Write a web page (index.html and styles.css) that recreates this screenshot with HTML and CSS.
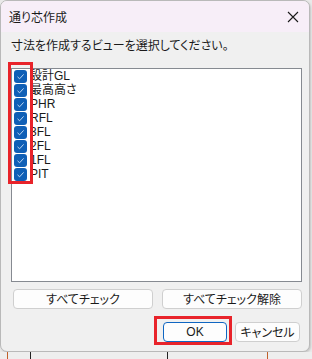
FILE: index.html
```html
<!DOCTYPE html>
<html lang="ja">
<head>
<meta charset="utf-8">
<link rel="stylesheet" href="styles.css">
</head>
<body>
<div class="screen">
  <div class="window">
    <div class="titlebar">
      <span class="title">通り芯作成</span>
      <span class="close">
        <svg width="12" height="12" viewBox="0 0 12 12"><path d="M1 1 L11 11 M11 1 L1 11" stroke="#1a1a1a" stroke-width="1.1" fill="none"/></svg>
      </span>
    </div>
    <div class="content">
      <div class="label">寸法を作成するビューを選択してください。</div>
      <div class="listbox">
        <div class="item"><span class="cb"><svg width="13" height="13" viewBox="0 0 13 13"><path d="M3.5 6.8 L5.6 8.8 L9.6 4.4" stroke="#bcd6f2" stroke-width="1" fill="none"/></svg></span><span class="txt">設計GL</span></div>
        <div class="item"><span class="cb"><svg width="13" height="13" viewBox="0 0 13 13"><path d="M3.5 6.8 L5.6 8.8 L9.6 4.4" stroke="#bcd6f2" stroke-width="1" fill="none"/></svg></span><span class="txt">最高高さ</span></div>
        <div class="item"><span class="cb"><svg width="13" height="13" viewBox="0 0 13 13"><path d="M3.5 6.8 L5.6 8.8 L9.6 4.4" stroke="#bcd6f2" stroke-width="1" fill="none"/></svg></span><span class="txt">PHR</span></div>
        <div class="item"><span class="cb"><svg width="13" height="13" viewBox="0 0 13 13"><path d="M3.5 6.8 L5.6 8.8 L9.6 4.4" stroke="#bcd6f2" stroke-width="1" fill="none"/></svg></span><span class="txt">RFL</span></div>
        <div class="item"><span class="cb"><svg width="13" height="13" viewBox="0 0 13 13"><path d="M3.5 6.8 L5.6 8.8 L9.6 4.4" stroke="#bcd6f2" stroke-width="1" fill="none"/></svg></span><span class="txt">3FL</span></div>
        <div class="item"><span class="cb"><svg width="13" height="13" viewBox="0 0 13 13"><path d="M3.5 6.8 L5.6 8.8 L9.6 4.4" stroke="#bcd6f2" stroke-width="1" fill="none"/></svg></span><span class="txt">2FL</span></div>
        <div class="item"><span class="cb"><svg width="13" height="13" viewBox="0 0 13 13"><path d="M3.5 6.8 L5.6 8.8 L9.6 4.4" stroke="#bcd6f2" stroke-width="1" fill="none"/></svg></span><span class="txt">1FL</span></div>
        <div class="item"><span class="cb"><svg width="13" height="13" viewBox="0 0 13 13"><path d="M3.5 6.8 L5.6 8.8 L9.6 4.4" stroke="#bcd6f2" stroke-width="1" fill="none"/></svg></span><span class="txt">PIT</span></div>
      </div>
      <div class="row-all">
        <button class="btn">すべてチェック</button>
        <button class="btn">すべてチェック解除</button>
      </div>
      <div class="row-ok">
        <button class="btn ok">OK</button>
        <button class="btn cancel">キャンセル</button>
      </div>
    </div>
    <div class="mark mark-checks"></div>
    <div class="mark mark-ok"></div>
  </div>
  <div class="behind">
    <span class="ln ln-a"></span>
    <span class="ln ln-b"></span>
    <span class="ln ln-c"></span>
    <span class="ln ln-d"></span>
  </div>
</div>
</body>
</html>
```

FILE: styles.css
```css
* { box-sizing: border-box; }
html, body {
  margin: 0;
  padding: 0;
  width: 312px;
  height: 359px;
  overflow: hidden;
  background: #dedede;
}
body {
  font-family: "Noto Sans CJK JP", "Noto Sans", sans-serif;
  font-feature-settings: "palt";
  color: #1a1a1a;
  font-size: 12px;
}
.screen {
  width: 312px;
  height: 359px;
  display: flex;
  flex-direction: column;
  background: #e9e9e9;
}
.window {
  position: relative;
  width: 310px;
  height: 352px;
  background: #f0f0f0;
  border: 1px solid #b9b9b9;
  border-radius: 7px;
  overflow: hidden;
  box-shadow: 1px 1px 2px rgba(0,0,0,0.15);
  display: flex;
  flex-direction: column;
}
.titlebar {
  height: 31px;
  flex: none;
  background: #f7eef8;
  display: flex;
  align-items: center;
  justify-content: space-between;
  padding: 0 5px 0 8px;
}
.title {
  font-size: 12px;
  line-height: 14px;
}
.close {
  width: 22px;
  height: 14px;
  display: flex;
  align-items: center;
  justify-content: center;
}
.content {
  display: flex;
  flex-direction: column;
  padding: 6px 7px 0 10px;
}
.label {
  height: 14px;
  line-height: 14px;
  font-size: 12px;
}
.listbox {
  margin-top: 16px;
  width: 291px;
  height: 214px;
  background: #ffffff;
  border: 1px solid #868a91;
  display: flex;
  flex-direction: column;
}
.item {
  height: 14px;
  display: flex;
  align-items: center;
  padding-left: 2px;
}
.cb {
  width: 13px;
  height: 13px;
  border-radius: 3px;
  background: #0f5fb6;
  display: flex;
  flex: none;
}
.txt {
  margin-left: 3px;
  font-family: "Liberation Sans", "Noto Sans CJK JP", sans-serif;
  font-size: 12px;
  line-height: 13px;
}
.row-all {
  margin-top: 7px;
  display: flex;
  gap: 9px;
  padding-left: 2px;
}
.btn {
  font-family: inherit;
  font-feature-settings: "palt";
  font-size: 12px;
  font-weight: 400;
  color: #1a1a1a;
  height: 20px;
  background: #fdfdfd;
  border: 1px solid #cfcfcf;
  border-radius: 4px;
  padding: 0;
  line-height: 18px;
}
.row-all .btn { width: 140px; }
.row-ok {
  margin-top: 13px;
  display: flex;
  justify-content: flex-end;
  gap: 8px;
  padding-right: 2px;
}
.ok {
  width: 64px;
  border: 1px solid #0f66c2;
  font-family: "Liberation Sans", "Noto Sans CJK JP", sans-serif;
}
.cancel { width: 65px; }
.mark {
  position: absolute;
  border: 3px solid #e8232a;
}
.mark-checks {
  left: 7px;
  top: 61px;
  width: 25px;
  height: 122px;
}
.mark-ok {
  left: 153px;
  top: 315px;
  width: 78px;
  height: 29px;
}
.behind {
  position: relative;
  flex: 1;
  background: #eeeeee;
}
.ln {
  position: absolute;
  top: 0;
  bottom: 0;
  width: 1px;
}
.ln-a { left: 7px; background: #c0602a; }
.ln-b { left: 30px; background: #222; }
.ln-c { left: 167px; background: #222; }
.ln-d { left: 267px; background: #c0602a; }
```
